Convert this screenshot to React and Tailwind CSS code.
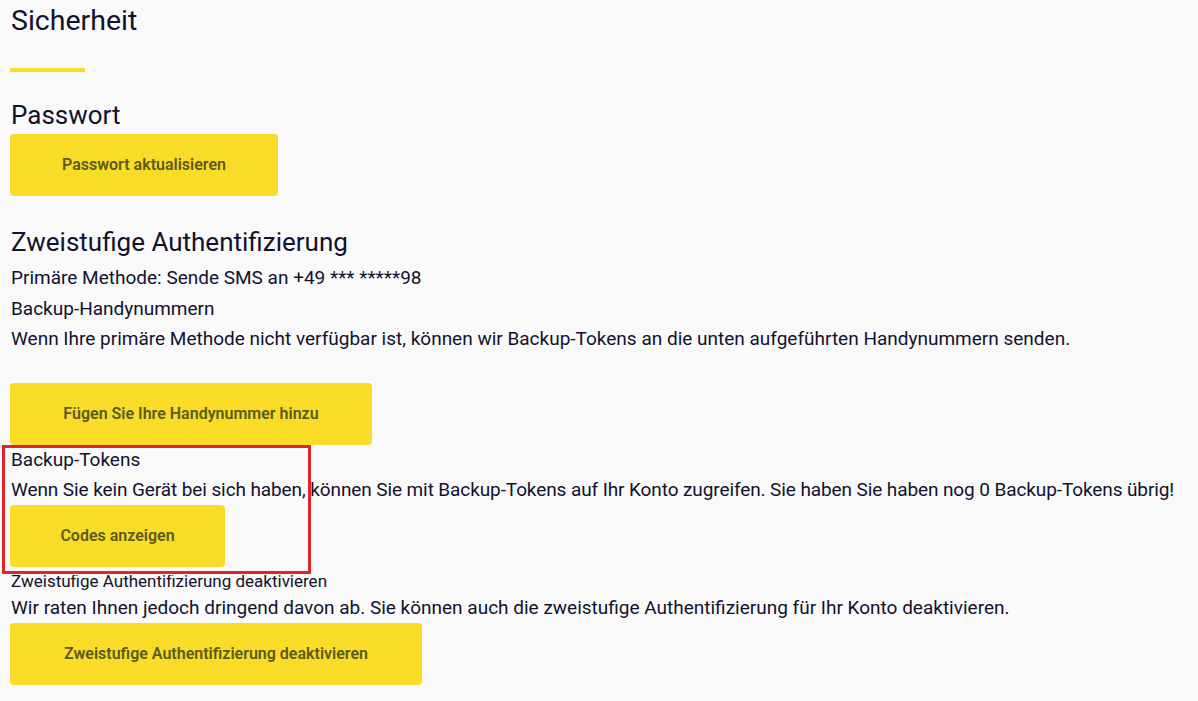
import React from "react";

function YellowButton({ width, children }) {
  return (
    <button
      className={`${width} h-[62px] rounded-[4px] bg-[#f8dc28] text-[16px] font-semibold text-[#5e5a18] flex items-center justify-center`}
    >
      {children}
    </button>
  );
}

export default function App() {
  return (
    <div
      className="relative min-h-screen bg-[#f9f9f9] pl-[10px] text-[#12122e]"
      style={{ fontFamily: "Roboto, 'Noto Sans', sans-serif" }}
    >
      <h1 className="pl-px pt-[3px] text-[28.5px] leading-[36px]">Sicherheit</h1>
      <div className="mt-[29px] h-[4px] w-[75px] bg-[#f8dc28]" />

      <h2 className="mt-[27px] pl-px text-[26px] leading-[33px]">Passwort</h2>
      <div className="mt-[2px]">
        <YellowButton width="w-[268px]">Passwort aktualisieren</YellowButton>
      </div>

      <h2 className="mt-[25px] pl-px text-[26px] leading-[42px]">
        Zweistufige Authentifizierung
      </h2>
      <div className="pl-px text-[19px] leading-[30.5px]">
        <p>Primäre Methode: Sende SMS an +49 *** *****98</p>
        <p>Backup-Handynummern</p>
        <p>
          Wenn Ihre primäre Methode nicht verfügbar ist, können wir Backup-Tokens
          an die unten aufgeführten Handynummern senden.
        </p>
      </div>
      <div className="mt-[28px]">
        <YellowButton width="w-[362px]">Fügen Sie Ihre Handynummer hinzu</YellowButton>
      </div>

      <div className="pl-px text-[19px] leading-[30px]">
        <p>Backup-Tokens</p>
        <p className="tracking-[-0.1px]">
          Wenn Sie kein Gerät bei sich haben, können Sie mit Backup-Tokens auf Ihr
          Konto zugreifen. Sie haben Sie haben nog 0 Backup-Tokens übrig!
        </p>
      </div>
      <YellowButton width="w-[215px]">Codes anzeigen</YellowButton>

      <div className="mt-[8px] flex h-[17px] items-end overflow-hidden pl-px">
        <p className="text-[17px] leading-[21px]">
          Zweistufige Authentifizierung deaktivieren
        </p>
      </div>
      <p className="mt-px pl-px text-[19px] leading-[30px]">
        Wir raten Ihnen jedoch dringend davon ab. Sie können auch die zweistufige
        Authentifizierung für Ihr Konto deaktivieren.
      </p>
      <YellowButton width="w-[412px]">Zweistufige Authentifizierung deaktivieren</YellowButton>

      {/* highlight frame over the backup token block */}
      <div className="pointer-events-none absolute left-[2px] top-[445px] h-[129px] w-[309px] border-[3px] border-[#e02428]" />
    </div>
  );
}
